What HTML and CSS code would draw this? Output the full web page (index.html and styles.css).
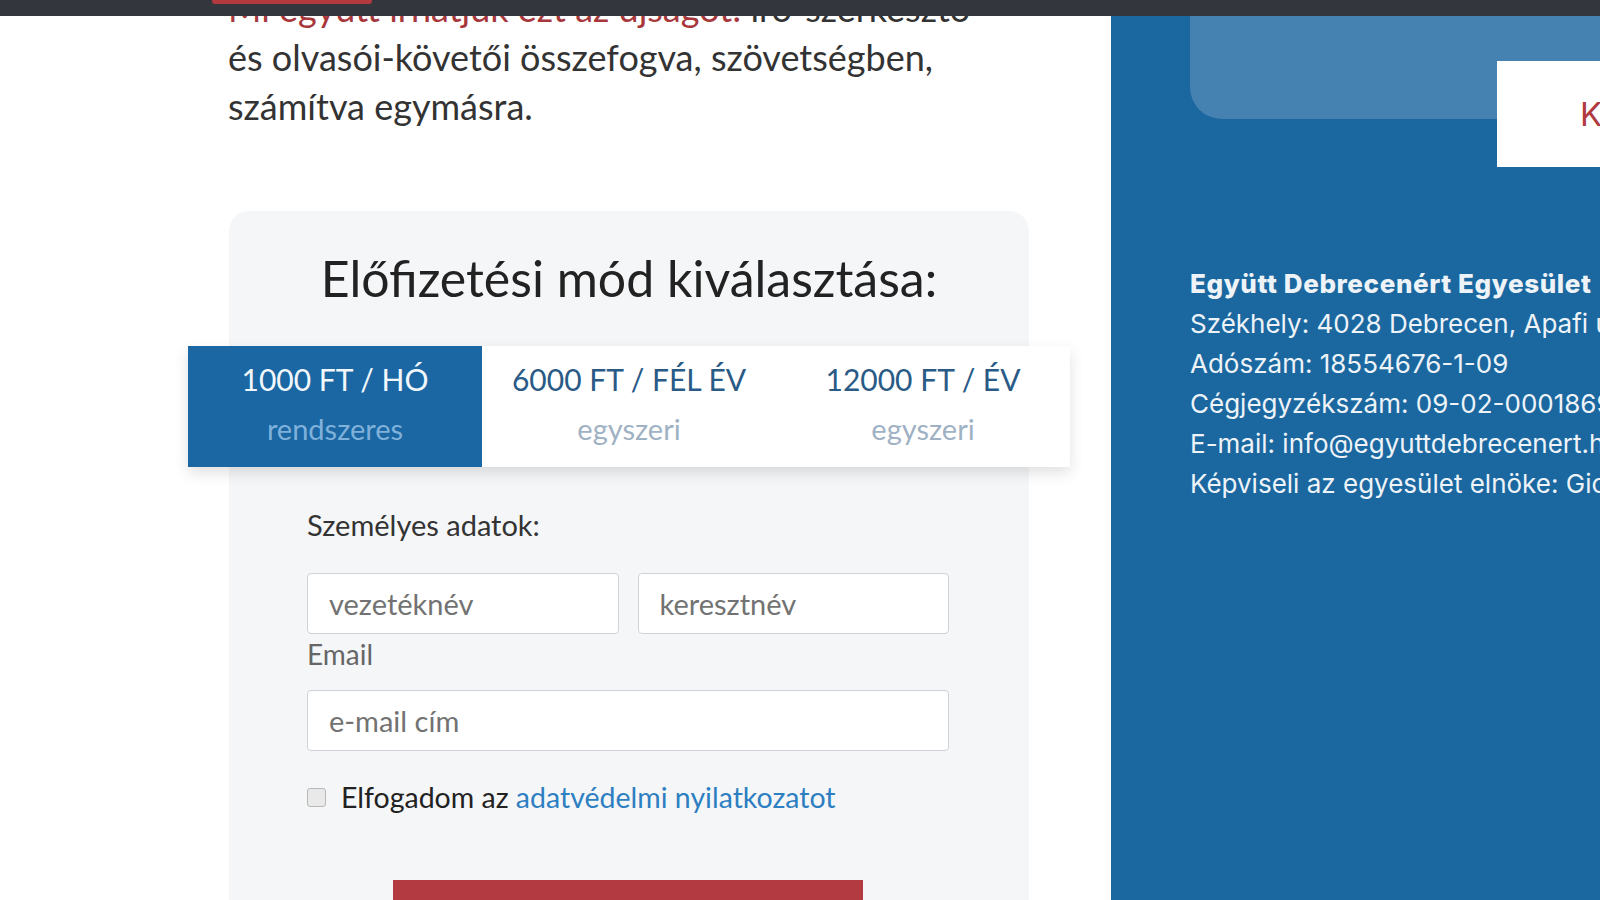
FILE: index.html
```html
<!DOCTYPE html>
<html lang="hu">
<head>
    <meta charset="UTF-8">
    <meta name="viewport" content="width=device-width, initial-scale=1.0">
    <title>Előfizetés</title>
    <link rel="stylesheet" href="styles.css">
</head>
<body>
    <header class="topbar">
        <span class="topbar-btn"></span>
    </header>

    <div class="page">
        <main class="content">
            <p class="intro"><a href="#" class="intro-link">Mi együtt írhatjuk ezt az újságot:</a> író-szerkesztő<br>és olvasói-követői összefogva, szövetségben,<br>számítva egymásra.</p>

            <section class="subscribe">
                <h2 class="subscribe-title">Előfizetési mód kiválasztása:</h2>

                <div class="plans">
                    <div class="plan active">
                        <div class="plan-price">1000 FT / HÓ</div>
                        <div class="plan-type">rendszeres</div>
                    </div>
                    <div class="plan">
                        <div class="plan-price">6000 FT / FÉL ÉV</div>
                        <div class="plan-type">egyszeri</div>
                    </div>
                    <div class="plan">
                        <div class="plan-price">12000 FT / ÉV</div>
                        <div class="plan-type">egyszeri</div>
                    </div>
                </div>

                <form class="sub-form">
                    <label class="form-heading">Személyes adatok:</label>
                    <div class="name-row">
                        <input type="text" class="field" placeholder="vezetéknév">
                        <input type="text" class="field" placeholder="keresztnév">
                    </div>
                    <label class="field-label" for="email">Email</label>
                    <input type="email" id="email" class="field" placeholder="e-mail cím">
                    <label class="accept">
                        <input type="checkbox" class="accept-box">
                        <span>Elfogadom az <a href="#">adatvédelmi nyilatkozatot</a></span>
                    </label>
                    <button type="button" class="submit-btn">Előfizetek</button>
                </form>
            </section>
        </main>

        <aside class="sidebar">
            <div class="sidebar-box"></div>
            <a href="#" class="contact-btn">Kapcsolat</a>
            <div class="org-info">
                <strong>Együtt Debrecenért Egyesület</strong><br>
                Székhely: 4028 Debrecen, Apafi utca 10.<br>
                Adószám: 18554676-1-09<br>
                Cégjegyzékszám: 09-02-0001869<br>
                E-mail: info@egyuttdebrecenert.hu<br>
                Képviseli az egyesület elnöke: Gicziné
            </div>
        </aside>
    </div>
</body>
</html>
```

FILE: styles.css
```css
body {
    margin: 0;
    font-family: Lato, "Open Sans", sans-serif;
    color: #333;
    background-color: #fff;
    overflow: hidden;
}
.topbar {
    position: fixed;
    top: 0;
    left: 0;
    right: 0;
    height: 16px;
    background-color: #33363d;
    z-index: 10;
}
.topbar-btn {
    position: absolute;
    left: 212px;
    top: 0;
    width: 160px;
    height: 4px;
    background-color: #b23a3f;
    border-radius: 0 0 3px 3px;
}
.page {
    display: flex;
    height: 900px;
}
.content {
    width: 1111px;
    flex-shrink: 0;
    padding-left: 229px;
    box-sizing: border-box;
}
.intro {
    margin: -16px 0 0 -1px;
    font-size: 36px;
    line-height: 49px;
    color: #333;
    white-space: nowrap;
}
.intro-link {
    color: #a8373c;
    text-decoration: none;
}
.subscribe {
    width: 800px;
    margin-top: 80px;
    padding-top: 43px;
    background-color: #f5f6f8;
    border-radius: 20px 20px 0 0;
    height: 700px;
}
.subscribe-title {
    margin: 0;
    text-align: center;
    font-size: 50px;
    line-height: 48px;
    font-weight: normal;
    color: #222;
}
.plans {
    display: flex;
    margin: 44px -41px 0;
    background-color: #fff;
    box-shadow: 0 6px 14px rgba(0, 0, 0, 0.12);
}
.plan {
    flex: 1;
    text-align: center;
    padding: 15px 0 20px;
}
.plan-price {
    font-size: 30px;
    line-height: 36px;
    color: #2a5a86;
}
.plan-type {
    margin-top: 14px;
    font-size: 29px;
    line-height: 36px;
    color: #9fb2c4;
}
.plan.active {
    background-color: #1a67a3;
}
.plan.active .plan-price {
    color: #f2f7fb;
}
.plan.active .plan-type {
    color: #7fb1da;
}
.sub-form {
    display: flex;
    flex-direction: column;
    padding: 0 80px 0 78px;
}
.form-heading {
    margin-top: 43px;
    font-size: 29px;
    line-height: 30px;
    color: #333;
}
.name-row {
    display: flex;
    gap: 19px;
    margin-top: 33px;
}
.field {
    flex: 1;
    min-width: 0;
    width: 100%;
    height: 61px;
    box-sizing: border-box;
    padding: 0 21px;
    border: 1px solid #cfd2d6;
    border-radius: 4px;
    background-color: #fff;
    font-family: inherit;
    font-size: 29px;
    color: #333;
}
.field::placeholder {
    color: #727272;
}
.field-label {
    margin-top: 5px;
    font-size: 28px;
    line-height: 30px;
    color: #666;
}
#email {
    margin-top: 21px;
    flex: none;
}
.accept {
    display: flex;
    align-items: center;
    gap: 15px;
    margin-top: 31px;
    font-size: 28.5px;
    line-height: 30px;
    color: #222;
}
.accept a {
    color: #2d7fc1;
    text-decoration: none;
}
.accept-box {
    appearance: none;
    margin: 0;
    width: 19px;
    height: 19px;
    border: 1px solid #b8b8b8;
    border-radius: 3px;
    background-color: #e9e9e9;
}
.submit-btn {
    align-self: center;
    margin-top: 68px;
    width: 470px;
    height: 60px;
    border: none;
    background-color: #b23a40;
    color: #fff;
    font-size: 24px;
}
.sidebar {
    flex: 1;
    background-color: #1b68a0;
    padding-left: 79px;
    overflow: hidden;
    font-family: Inter, "Noto Sans", sans-serif;
}
.sidebar-box {
    height: 119px;
    background-color: #4682b1;
    border-bottom-left-radius: 32px;
}
.contact-btn {
    display: block;
    width: 200px;
    height: 106px;
    box-sizing: border-box;
    margin: -58px 0 0 307px;
    padding-left: 83px;
    background-color: #fff;
    color: #b03a3f;
    font-size: 33px;
    line-height: 106px;
    text-decoration: none;
    white-space: nowrap;
}
.org-info {
    margin-top: 97px;
    font-size: 26px;
    line-height: 40px;
    color: #eef3f8;
    white-space: nowrap;
}
.org-info strong {
    font-weight: 800;
    letter-spacing: 0.6px;
}
```
